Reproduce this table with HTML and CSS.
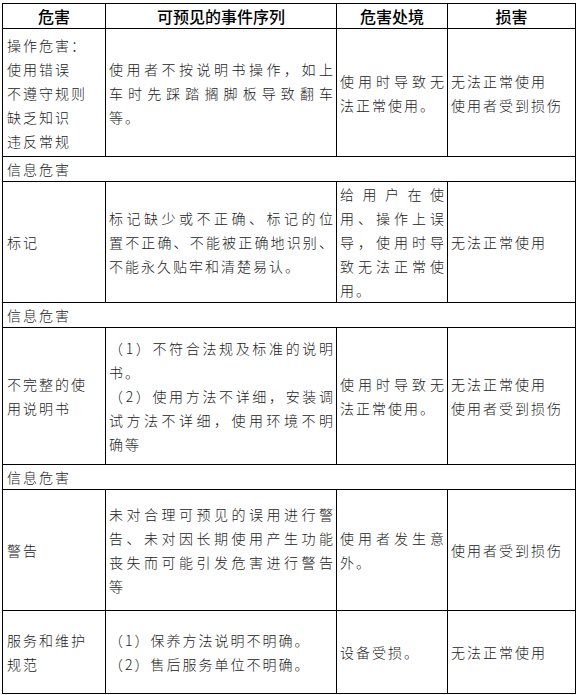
FILE: index.html
```html
<!DOCTYPE html>
<html lang="zh-CN">
<head>
<meta charset="utf-8">
<title>危害分析</title>
<link rel="stylesheet" href="styles.css">
</head>
<body>
<table class="hazard">
  <colgroup>
    <col class="c1"><col class="c2"><col class="c3"><col class="c4">
  </colgroup>
  <tr class="r-head">
    <th>危害</th>
    <th>可预见的事件序列</th>
    <th>危害处境</th>
    <th>损害</th>
  </tr>
  <tr class="r-op">
    <td class="first">
      <div>操作危害：</div>
      <div>使用错误</div>
      <div>不遵守规则</div>
      <div>缺乏知识</div>
      <div>违反常规</div>
    </td>
    <td>
      <div class="j">使用者不按说明书操作，如上</div>
      <div class="j">车时先踩踏搁脚板导致翻车</div>
      <div>等。</div>
    </td>
    <td>
      <div class="j">使用时导致无</div>
      <div>法正常使用。</div>
    </td>
    <td>
      <div>无法正常使用</div>
      <div>使用者受到损伤</div>
    </td>
  </tr>
  <tr class="r-info">
    <td class="first" colspan="4">信息危害</td>
  </tr>
  <tr class="r-mark">
    <td class="first">标记</td>
    <td>
      <div class="j">标记缺少或不正确、标记的位</div>
      <div class="j">置不正确、不能被正确地识别、</div>
      <div>不能永久贴牢和清楚易认。</div>
    </td>
    <td>
      <div class="j">给用户在使</div>
      <div class="j">用、操作上误</div>
      <div class="j">导，使用时导</div>
      <div class="j">致无法正常使</div>
      <div>用。</div>
    </td>
    <td>无法正常使用</td>
  </tr>
  <tr class="r-info">
    <td class="first" colspan="4">信息危害</td>
  </tr>
  <tr class="r-manual">
    <td class="first">
      <div>不完整的使</div>
      <div>用说明书</div>
    </td>
    <td>
      <div class="j">（1）不符合法规及标准的说明</div>
      <div>书。</div>
      <div class="j">（2）使用方法不详细，安装调</div>
      <div class="j">试方法不详细，使用环境不明</div>
      <div>确等</div>
    </td>
    <td>
      <div class="j">使用时导致无</div>
      <div>法正常使用。</div>
    </td>
    <td>
      <div>无法正常使用</div>
      <div>使用者受到损伤</div>
    </td>
  </tr>
  <tr class="r-info2">
    <td class="first" colspan="4">信息危害</td>
  </tr>
  <tr class="r-warn">
    <td class="first">警告</td>
    <td>
      <div class="j">未对合理可预见的误用进行警</div>
      <div class="j">告、未对因长期使用产生功能</div>
      <div class="j">丧失而可能引发危害进行警告</div>
      <div>等</div>
    </td>
    <td>
      <div class="j">使用者发生意</div>
      <div>外。</div>
    </td>
    <td>使用者受到损伤</td>
  </tr>
  <tr class="r-service">
    <td class="first">
      <div>服务和维护</div>
      <div>规范</div>
    </td>
    <td>
      <div>（1）保养方法说明不明确。</div>
      <div>（2）售后服务单位不明确。</div>
    </td>
    <td>设备受损。</td>
    <td>无法正常使用</td>
  </tr>
</table>
</body>
</html>
```

FILE: styles.css
```css
html, body {
  background: #ffffff;
}

body {
  margin: 3px 0 0 2px;
  font-family: "Noto Sans CJK SC", "Noto Sans", sans-serif;
}

.hazard {
  border-collapse: collapse;
  table-layout: fixed;
  width: 573px;
}

.c1 { width: 103px; }
.c2 { width: 231px; }
.c3 { width: 111px; }
.c4 { width: 128px; }

.hazard th,
.hazard td {
  border: 1px solid #000;
  padding: 0 3px;
  vertical-align: middle;
  text-align: left;
}

.hazard th {
  font-size: 16px;
  font-weight: 500;
  line-height: 22px;
  color: #000;
  text-align: center;
}

.hazard td {
  font-size: 14px;
  font-weight: 300;
  line-height: 24px;
  letter-spacing: 2px;
  color: #222;
  white-space: nowrap;
}

.hazard td.first {
  padding-left: 4px;
}

.j {
  text-align: justify;
  text-align-last: justify;
  letter-spacing: 0;
}

.r-head { height: 25px; }
.r-op { height: 128px; }
.r-info { height: 24px; }
.r-info2 { height: 25px; }
.r-mark { height: 121px; }
.r-manual { height: 137px; }
.r-warn { height: 121px; }
.r-service { height: 83px; }
```
